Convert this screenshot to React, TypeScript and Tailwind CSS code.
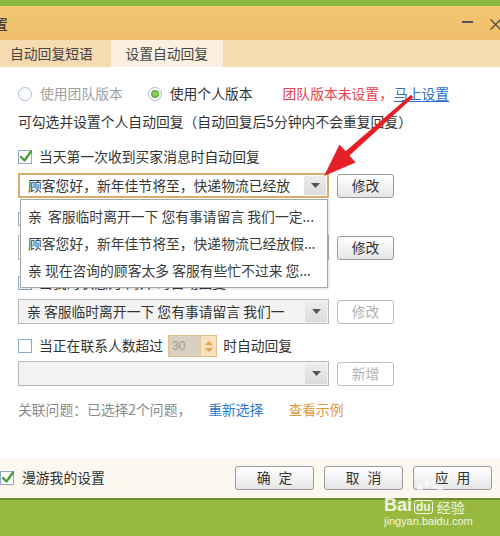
import React from "react";

function Check({ checked }: { checked?: boolean }) {
  return (
    <span className="relative w-[14px] h-[14px] border border-[#8ea9c6] bg-white shrink-0 block">
      {checked && (
        <svg className="absolute left-[0px] top-[-2px]" width="14" height="15" viewBox="0 0 14 15">
          <path d="M2 8 L5.5 11.5 L12 2.5" stroke="#3f9b2c" strokeWidth="2.2" fill="none" strokeLinecap="round" strokeLinejoin="round" />
        </svg>
      )}
    </span>
  );
}

function Radio({ on }: { on?: boolean }) {
  return (
    <span className="w-[14px] h-[14px] rounded-full border border-[#a9bdd1] bg-white flex items-center justify-center shrink-0">
      {on && <span className="w-[8px] h-[8px] rounded-full bg-radial from-[#9be36a] to-[#2f9a1c]" />}
    </span>
  );
}

function Tri() {
  return (
    <svg width="9" height="5" viewBox="0 0 9 5">
      <path d="M0 0 L9 0 L4.5 5 Z" fill="#555" />
    </svg>
  );
}

function Combo({ text, focus, disabled }: { text?: string; focus?: boolean; disabled?: boolean }) {
  return (
    <div
      className={
        focus
          ? "w-[311px] h-[25px] flex border-2 border-[#d8ad6c] bg-white"
          : disabled
          ? "w-[311px] h-[25px] flex border border-[#b9b9b9] bg-[#f3f3f3]"
          : "w-[311px] h-[25px] flex border border-[#b9b9b9] bg-white"
      }
    >
      <div className="flex-1 pl-[8px] flex items-center whitespace-nowrap overflow-hidden text-[#333]">{text}</div>
      <div className="w-[22px] my-[1px] mr-[1px] flex items-center justify-center bg-linear-to-b from-[#ececec] to-[#dcdcdc]">
        <Tri />
      </div>
    </div>
  );
}

function Btn({ label, disabled }: { label: string; disabled?: boolean }) {
  return (
    <div
      className={
        disabled
          ? "w-[57px] h-[24px] rounded-[3px] border border-[#bdbdbd] bg-white flex items-center justify-center text-[#b0b0b0]"
          : "w-[57px] h-[24px] rounded-[3px] border border-[#9a9a9a] bg-linear-to-b from-white to-[#e6e6e6] flex items-center justify-center text-[#333]"
      }
    >
      {label}
    </div>
  );
}

function FootBtn({ a, b }: { a: string; b: string }) {
  return (
    <div className="w-[79px] h-[24px] rounded-[3px] border border-[#9a9a9a] bg-linear-to-b from-white to-[#e6e6e6] flex items-center justify-center gap-[8px] text-[#333]">
      <span>{a}</span>
      <span>{b}</span>
    </div>
  );
}

export default function App() {
  return (
    <div className="w-[500px] h-[536px] overflow-hidden relative bg-white text-[13.8px] leading-none font-['Noto_Sans_CJK_SC','Noto_Sans',sans-serif] text-[#333]">
      {/* top green */}
      <div className="h-[6px] bg-[#8cb842]" />
      {/* title bar */}
      <div className="h-[34px] bg-linear-to-b from-[#f2c671] to-[#efbf6a] flex items-center justify-between">
        <span className="ml-[-22px] text-[15px] text-[#333]">设置</span>
        <div className="flex items-center gap-[14px] mr-[-4px] text-[#444]">
          <span className="block w-[11px] h-[1.5px] bg-[#555] mt-[-2px]" />
          <span className="text-[17px] leading-none">×</span>
        </div>
      </div>
      {/* tabs */}
      <div className="h-[27px] bg-[#f5dab2] flex items-stretch text-[#444]">
        <div className="pl-[10px] pr-[18px] flex items-center">自动回复短语</div>
        <div className="w-[112px] bg-[#fbefdf] flex items-center justify-center">设置自动回复</div>
      </div>

      {/* content */}
      <div className="relative h-[391px] pl-[18px]">
        <div className="pt-[17px] h-[37px] flex items-center">
          <Radio />
          <span className="ml-[8px] text-[#a0a0a0]">使用团队版本</span>
          <span className="ml-[25px]"><Radio on /></span>
          <span className="ml-[8px]">使用个人版本</span>
          <span className="ml-[30px] text-[#e8434e]">团队版本未设置，</span>
          <span className="ml-[1px] text-[#2670c9] underline underline-offset-2">马上设置</span>
        </div>
        <div className="mt-[8px] h-[20px] flex items-center">可勾选并设置个人自动回复（自动回复后5分钟内不会重复回复）</div>

        <div className="mt-[15px] h-[20px] flex items-center">
          <Check checked />
          <span className="ml-[7px]">当天第一次收到买家消息时自动回复</span>
        </div>
        <div className="mt-[6px] flex items-center gap-[8px]">
          <Combo focus text="顾客您好，新年佳节将至，快递物流已经放" />
          <Btn label="修改" />
        </div>

        <div className="mt-[11px] h-[20px] flex items-center">
          <Check />
          <span className="ml-[7px]">当我的状态为'忙碌'时自动回复</span>
        </div>
        <div className="mt-[6px] flex items-center gap-[8px]">
          <Combo text="亲 现在咨询的顾客太多 客服有些忙不过来" />
          <Btn label="修改" />
        </div>

        <div className="mt-[13px] h-[20px] flex items-center">
          <Check />
          <span className="ml-[7px]">当我的状态为'离开'时自动回复</span>
        </div>
        <div className="mt-[6px] flex items-center gap-[8px]">
          <Combo disabled text="亲  客服临时离开一下 您有事请留言 我们一" />
          <Btn label="修改" disabled />
        </div>

        <div className="mt-[11px] h-[22px] flex items-center">
          <Check />
          <span className="ml-[7px]">当正在联系人数超过</span>
          <div className="ml-[5px] h-[22px] w-[49px] flex border border-[#e2c08e]">
            <div className="flex-1 bg-[#d9d0c2] text-[#a59a8a] text-[12px] flex items-center pl-[3px] font-['Liberation_Sans',sans-serif]">30</div>
            <div className="w-[16px] bg-[#f8e2bd] flex flex-col items-center justify-center gap-[3px] border-l border-[#e9c996]">
              <svg width="8" height="4" viewBox="0 0 8 4"><path d="M0 4 L8 4 L4 0 Z" fill="#e3a24a" /></svg>
              <svg width="8" height="4" viewBox="0 0 8 4"><path d="M0 0 L8 0 L4 4 Z" fill="#e3a24a" /></svg>
            </div>
          </div>
          <span className="ml-[6px]">时自动回复</span>
        </div>
        <div className="mt-[4px] flex items-center gap-[8px]">
          <Combo disabled text="" />
          <Btn label="新增" disabled />
        </div>

        <div className="mt-[14px] h-[20px] flex items-center">
          <span className="text-[#8a8a8a]">关联问题：已选择2个问题，</span>
          <span className="ml-[17px] text-[#2a78cf]">重新选择</span>
          <span className="ml-[25px] text-[#e3973a]">查看示例</span>
        </div>

        {/* dropdown list overlay */}
        <div className="absolute left-[20px] top-[132px] w-[308px] h-[89px] bg-white border border-[#a8a8a8] shadow-[1px_1px_2px_rgba(0,0,0,0.15)] flex flex-col pt-[3px] text-[#3a3a3a]">
          <div className="h-[27px] pl-[7px] flex items-center whitespace-nowrap">亲&nbsp;&nbsp;客服临时离开一下 您有事请留言 我们一定...</div>
          <div className="h-[27px] pl-[7px] flex items-center whitespace-nowrap">顾客您好，新年佳节将至，快递物流已经放假...</div>
          <div className="h-[27px] pl-[7px] flex items-center whitespace-nowrap">亲 现在咨询的顾客太多 客服有些忙不过来 您...</div>
        </div>
      </div>

      {/* footer */}
      <div className="h-[40px] bg-[#fcf7ef] flex items-center">
        <Check checked />
        <span className="ml-[8px]">漫游我的设置</span>
        <div className="ml-auto mr-[8px] flex gap-[10px]">
          <FootBtn a="确" b="定" />
          <FootBtn a="取" b="消" />
          <FootBtn a="应" b="用" />
        </div>
      </div>
      {/* bottom green */}
      <div className="h-[38px] bg-[#98b940] border-t-2 border-[#6f8c34]" />

      {/* red arrow overlay */}
      <svg className="absolute left-0 top-0 pointer-events-none" width="500" height="536" viewBox="0 0 500 536">
        <polygon
          points="413.2,97.3 349.5,155.5 355.6,162.5 324,176 339.5,144.5 345.6,151.3 411,94.7"
          fill="#e51f26"
        />
      </svg>

      {/* watermark */}
      <div className="absolute left-[384px] top-[496px] text-white/85 pointer-events-none">
        <div className="flex items-end gap-[2px]">
          <span className="text-[18px] font-bold font-['Liberation_Sans',sans-serif] leading-none">Bai</span>
          <span className="text-[12px] font-bold font-['Liberation_Sans',sans-serif] leading-none border-[1.5px] border-white/85 rounded-[3px] px-[1px]">du</span>
          <span className="text-[14px] leading-none ml-[2px]">经验</span>
        </div>
        <div className="text-[11px] font-['Liberation_Sans',sans-serif] mt-[2px] leading-none">jingyan.baidu.com</div>
      </div>
      <svg className="absolute left-[412px] top-[480px] pointer-events-none opacity-60" width="34" height="24" viewBox="0 0 34 24">
        <ellipse cx="8" cy="8" rx="3" ry="4" fill="white" />
        <ellipse cx="15" cy="4" rx="3" ry="4" fill="white" />
        <ellipse cx="22" cy="5" rx="3" ry="4" fill="white" />
        <ellipse cx="28" cy="10" rx="3" ry="4" fill="white" />
      </svg>
    </div>
  );
}
